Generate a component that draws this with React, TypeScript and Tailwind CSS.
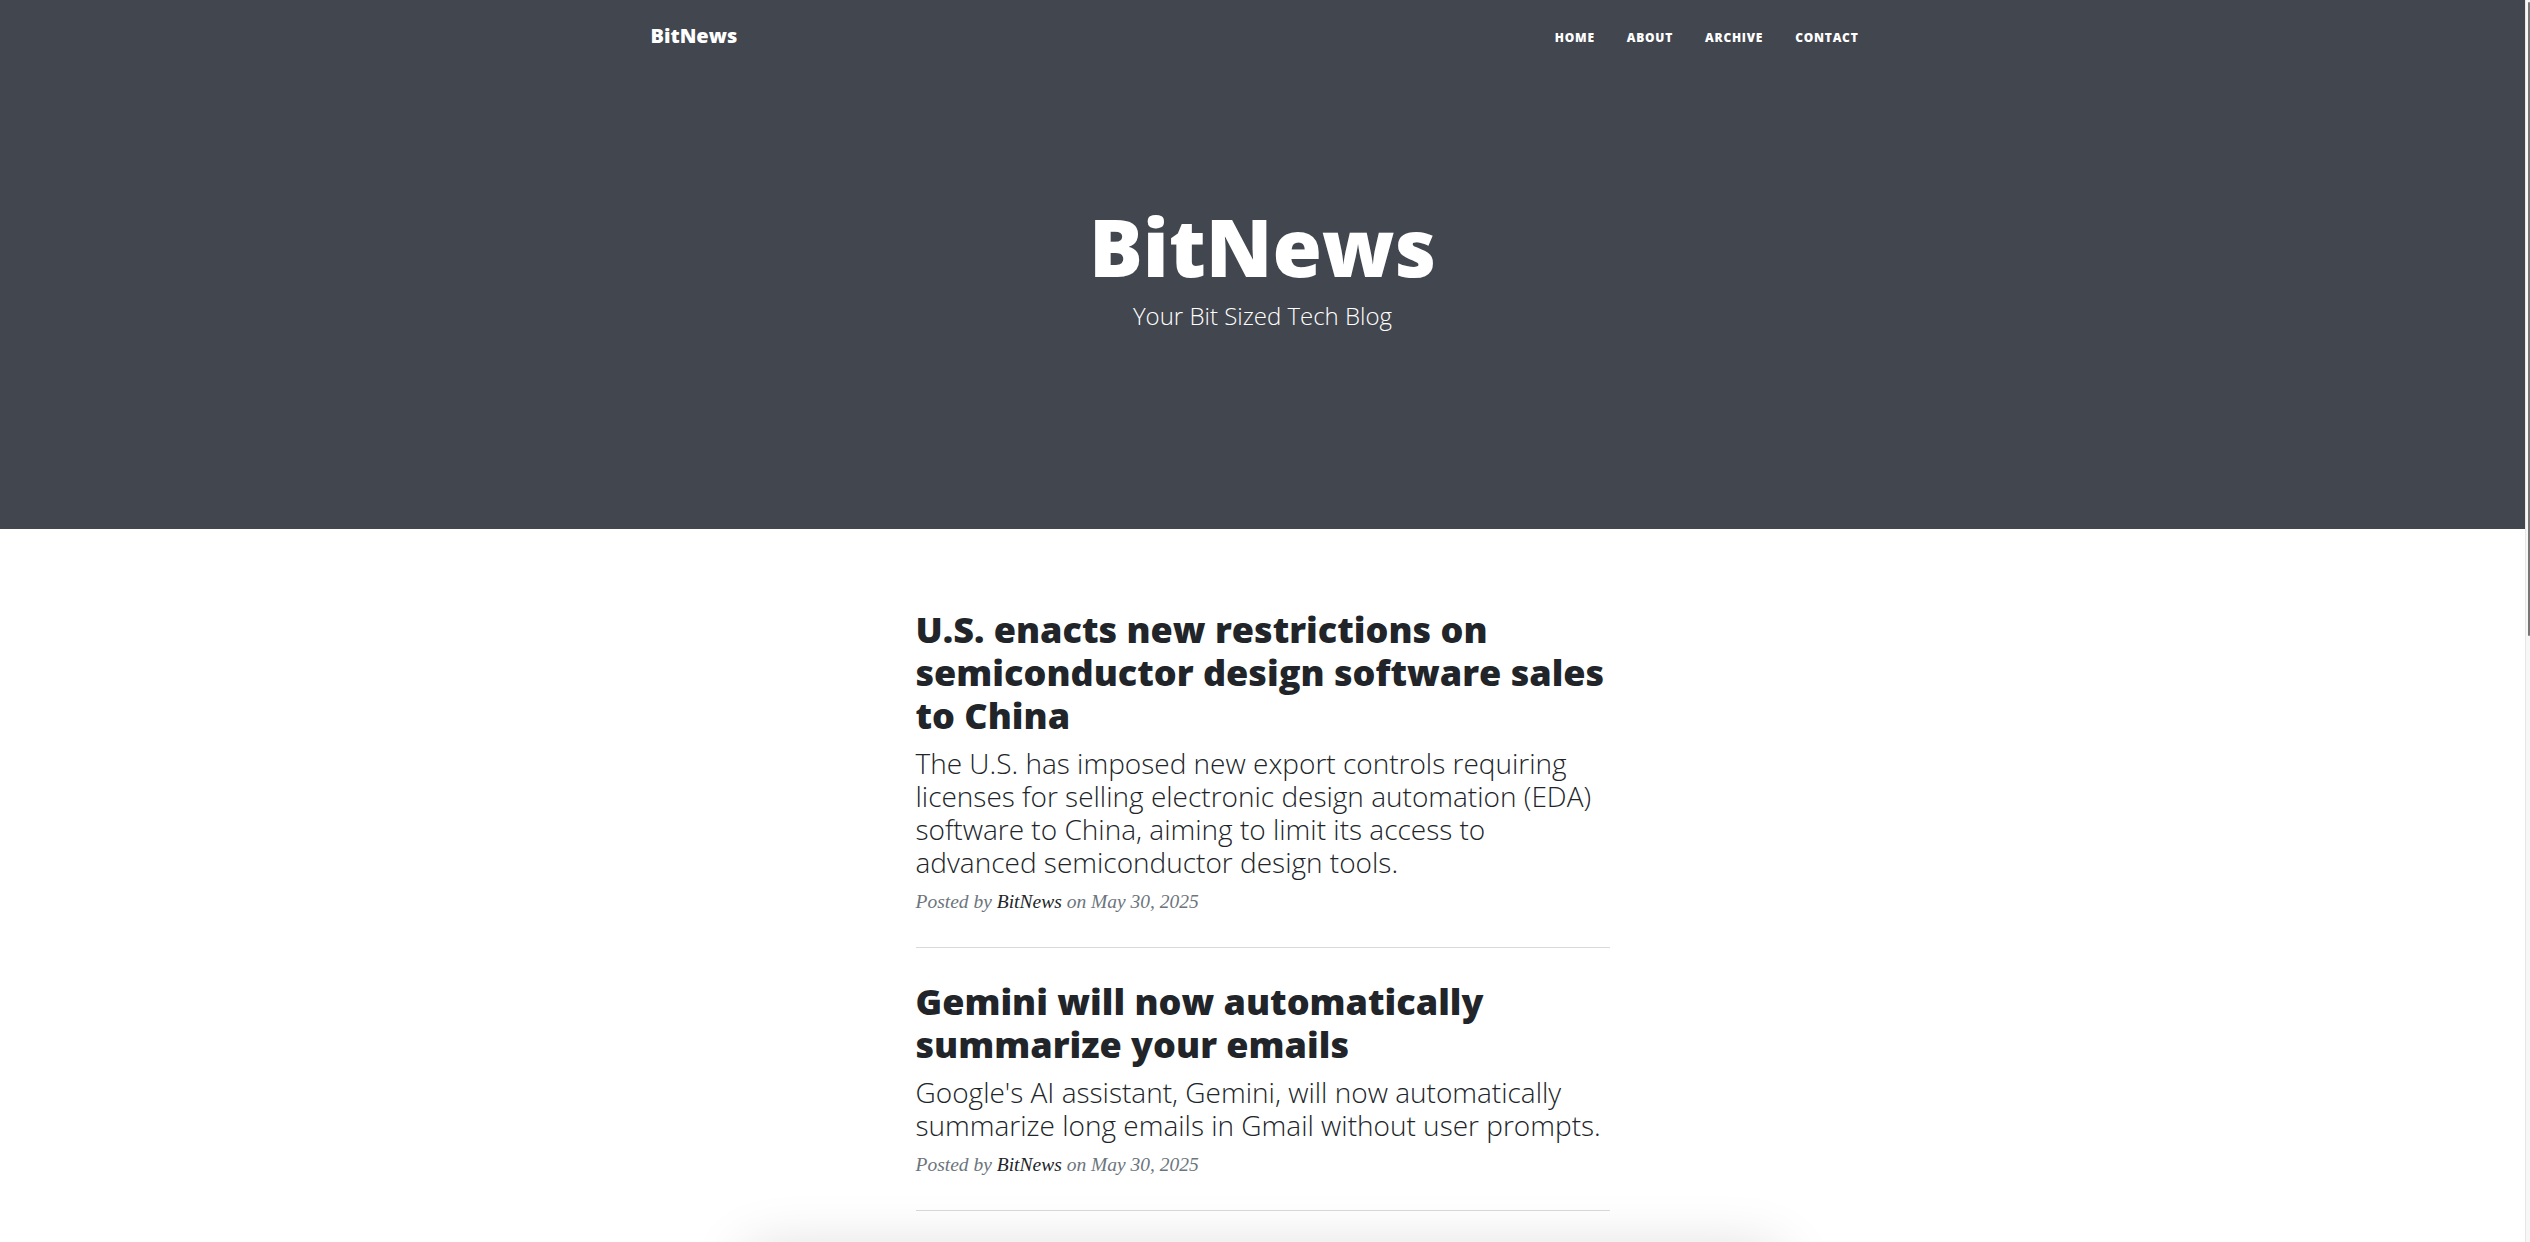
import React from "react";

const posts = [
  {
    title: "U.S. enacts new restrictions on semiconductor design software sales to China",
    excerpt:
      "The U.S. has imposed new export controls requiring licenses for selling electronic design automation (EDA) software to China, aiming to limit its access to advanced semiconductor design tools.",
    date: "May 30, 2025",
  },
  {
    title: "Gemini will now automatically summarize your emails",
    excerpt:
      "Google's AI assistant, Gemini, will now automatically summarize long emails in Gmail without user prompts.",
    date: "May 30, 2025",
  },
];

export default function App() {
  return (
    <div className="relative flex h-[1242px] w-[2530px] overflow-hidden bg-white font-['Open_Sans',sans-serif]">
      <main className="w-[2525px] shrink-0">
        <header className="h-[529px] bg-[#42464e] text-white">
          <nav className="mx-auto flex w-[1224px] items-start justify-between pt-[21px]">
            <a className="text-[20px] font-extrabold leading-[30px]">BitNews</a>
            <ul className="mt-[7.5px] flex">
              {["Home", "About", "Archive", "Contact"].map((l) => (
                <li key={l} className="px-4 text-[12px] font-extrabold uppercase leading-[18px] tracking-[0.0625em]">
                  {l}
                </li>
              ))}
            </ul>
          </nav>
          <div className="mt-[147px] text-center">
            <h1 className="text-[80px] font-extrabold leading-[96px]">BitNews</h1>
            <span className="mt-[9px] block text-[24px] font-light leading-[26.4px]">Your Bit Sized Tech Blog</span>
          </div>
        </header>

        <section className="mx-auto w-[694px] pt-[79px] text-[#212529]">
          {posts.map((p, i) => (
            <div key={i}>
              <div className={i === 0 ? "" : "mt-[32px]"}>
                <h2 className="text-[36px] font-extrabold leading-[43.2px]">{p.title}</h2>
                <h3 className="mt-[9.5px] text-[28px] font-light leading-[33px]">{p.excerpt}</h3>
                <p className="mt-[8px] font-['Liberation_Serif',serif] text-[19.5px] italic leading-[29px] text-[#6c757d]">
                  Posted by <span className="text-[#212529]">BitNews</span> on {p.date}
                </p>
              </div>
              <hr className="mt-[31px] border-0 border-t border-[#dadada]" />
            </div>
          ))}
        </section>
      </main>

      {/* overlay scrollbar */}
      <div className="relative w-[5px] shrink-0 border-l border-[#e6e6e6] bg-[#f7f7f7]">
        <div className="absolute right-0 top-[2px] h-[634px] w-[2px] rounded-full bg-[#777777]" />
      </div>

      {/* floating panel peeking from below the viewport */}
      <div className="absolute left-[745px] top-[1252px] h-[200px] w-[1035px] rounded-2xl bg-white shadow-[0_0_60px_rgba(0,0,0,0.16)]" />
    </div>
  );
}
